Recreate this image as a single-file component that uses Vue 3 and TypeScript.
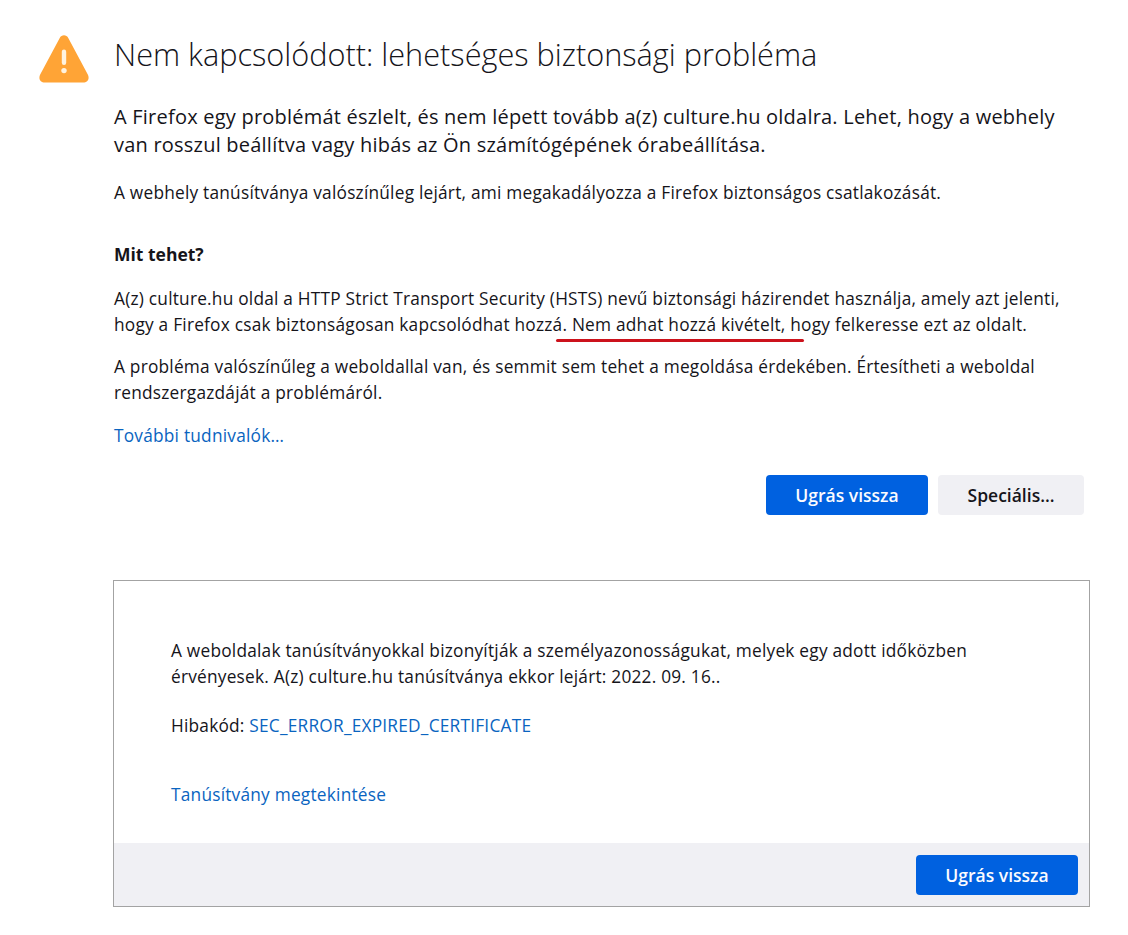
<script setup lang="ts">
const errorCode: string = 'SEC_ERROR_EXPIRED_CERTIFICATE'
</script>

<template>
  <main class="page">
    <svg class="warn" viewBox="0 0 50 48" aria-hidden="true">
      <path d="M20.6 3.2 1.2 39.6C-1 44 1.6 47.5 5.8 47.5h38.4c4.2 0 6.8-3.5 4.6-7.9L29.4 3.2c-2-3.8-6.8-3.8-8.8 0Z" fill="#ffa436" />
      <rect x="22.8" y="14.5" width="4.4" height="15.5" rx="2.2" fill="#fff3e0" />
      <circle cx="25" cy="35.6" r="2.7" fill="#fff3e0" />
    </svg>
    <div class="content">
      <h1>Nem kapcsolódott: lehetséges biztonsági probléma</h1>
      <p class="lead">A Firefox egy problémát észlelt, és nem lépett tovább a(z) culture.hu oldalra. Lehet, hogy a webhely<br>van rosszul beállítva vagy hibás az Ön számítógépének órabeállítása.</p>
      <p class="expired">A webhely tanúsítványa valószínűleg lejárt, ami megakadályozza a Firefox biztonságos csatlakozását.</p>
      <h2>Mit tehet?</h2>
      <p class="hsts">A(z) culture.hu oldal a HTTP Strict Transport Security (HSTS) nevű biztonsági házirendet használja, amely azt jelenti,<br>hogy a Firefox csak biztonságosan kapcsolódhat hozzá. <span class="marked">Nem adhat hozzá kivételt,<i class="redline"></i></span> hogy felkeresse ezt az oldalt.</p>
      <p class="problem">A probléma valószínűleg a weboldallal van, és semmit sem tehet a megoldása érdekében. Értesítheti a weboldal<br>rendszergazdáját a problémáról.</p>
      <a class="link more">További tudnivalók…</a>
      <div class="actions">
        <button class="btn primary">Ugrás vissza</button>
        <button class="btn secondary">Speciális…</button>
      </div>
    </div>
    <section class="details">
      <div class="details-body">
        <p>A weboldalak tanúsítványokkal bizonyítják a személyazonosságukat, melyek egy adott időközben<br>érvényesek. A(z) culture.hu tanúsítványa ekkor lejárt: 2022. 09. 16..</p>
        <p class="code">Hibakód: <a class="link">{{ errorCode }}</a></p>
        <a class="link view">Tanúsítvány megtekintése</a>
      </div>
      <div class="details-foot">
        <button class="btn primary">Ugrás vissza</button>
      </div>
    </section>
  </main>
</template>

<style>
html, body { margin: 0; background: #fff; }
</style>

<style scoped>
.page {
  position: relative;
  width: 1128px;
  height: 935px;
  box-sizing: border-box;
  padding: 35px 0 0 113px;
  font-family: "Open Sans", "Noto Sans", sans-serif;
  color: #15141a;
  overflow: hidden;
}
.warn { position: absolute; left: 39px; top: 35px; width: 50px; height: 48px; }
.content { width: 970px; padding-left: 1px; }
h1 {
  margin: 0;
  font-size: 30.7px;
  line-height: 38px;
  font-weight: 300;
  white-space: nowrap;
}
p { margin: 0; white-space: nowrap; }
.lead { margin-top: 30px; font-size: 20px; letter-spacing: 0.22px; line-height: 28px; }
.expired { margin-top: 21px; font-size: 17.3px; letter-spacing: 0.22px; line-height: 26px; }
h2 { margin: 35px 0 0; font-size: 17.5px; line-height: 26px; font-weight: 700; }
.hsts { margin-top: 19px; font-size: 17.3px; letter-spacing: 0.22px; line-height: 26px; }
.problem { margin-top: 16px; font-size: 17.3px; letter-spacing: 0.22px; line-height: 26px; }
.marked { position: relative; }
.redline {
  position: absolute;
  left: -16px;
  right: -18px;
  bottom: -6px;
  height: 3px;
  border-radius: 2px;
  background: #cc121c;
}
.link { color: #0061e0; }
.more { display: block; margin-top: 16px; font-size: 17.3px; letter-spacing: 0.22px; line-height: 27px; color: #0a64c0; }
.actions { display: flex; justify-content: flex-end; gap: 10px; margin-top: 26px; }
.btn {
  height: 40px;
  border: 0;
  border-radius: 4px;
  font: 600 17.5px/40px "Open Sans", "Noto Sans", sans-serif;
  padding: 0;
}
.primary { width: 162px; background: #0061e0; color: #fbfbfe; }
.secondary { width: 146px; background: #f0f0f4; color: #15141a; }
.details {
  margin-top: 65px;
  width: 977px;
  height: 327px;
  box-sizing: border-box;
  border: 1px solid #a3a3a3;
  display: flex;
  flex-direction: column;
  justify-content: space-between;
  font-size: 17.3px;
  letter-spacing: 0.22px;
  line-height: 26px;
}
.details-body { padding: 57px 57px 0; }
.code { margin-top: 23px; }
.code .link, .view { color: #0a64c0; }
.view { display: block; margin-top: 43px; }
.details-foot {
  height: 63px;
  box-sizing: border-box;
  background: #f0f0f4;
  padding: 12px 11px 0 0;
  display: flex;
  justify-content: flex-end;
}
</style>
